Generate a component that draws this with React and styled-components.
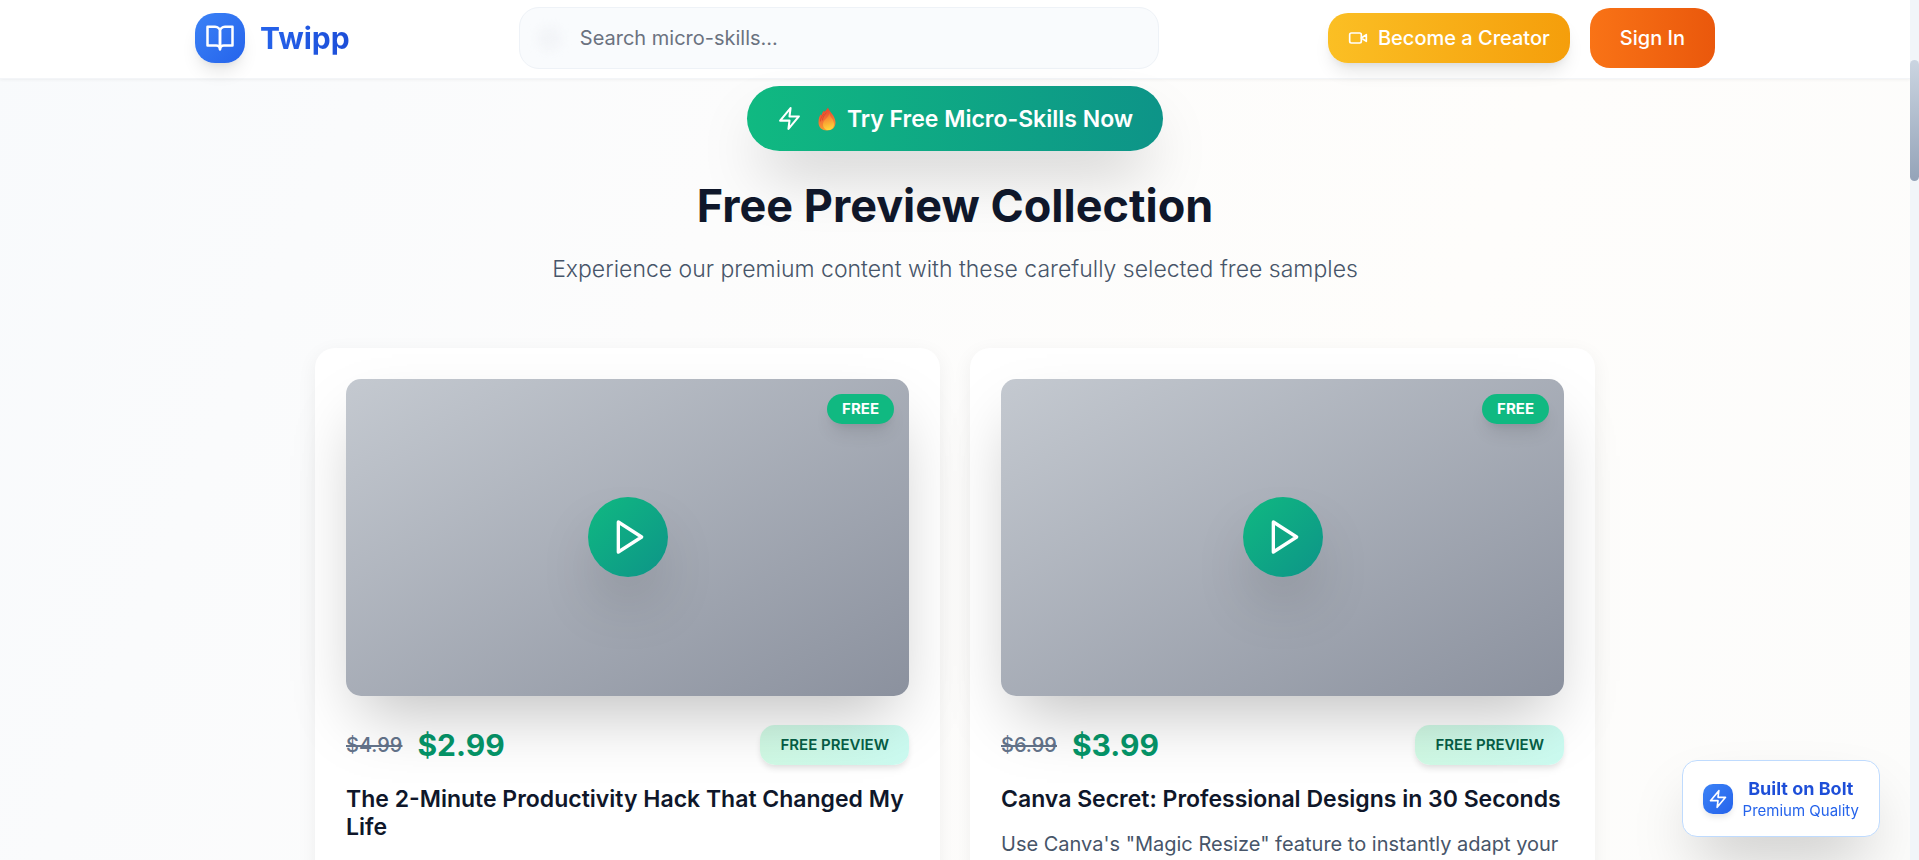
import React from 'react';
import styled, { createGlobalStyle } from 'styled-components';

const GlobalStyle = createGlobalStyle`
  *, *::before, *::after { box-sizing: border-box; }
  body { margin: 0; font-family: Inter, "Liberation Sans", sans-serif; color: #0f172a; }
  h2, h3, p { margin: 0; }
  button, input { font-family: inherit; }
  button { border: 0; cursor: pointer; }
`;

const softShadow = '0 12px 18px -4px rgba(0,0,0,.1), 0 5px 8px -5px rgba(0,0,0,.1)';
const deepShadow = '0 31px 62px -15px rgba(0, 0, 0, 0.25)';

const Page = styled.div`
  height: 100vh;
  overflow: hidden;
  padding-right: 9px;
  background: linear-gradient(112deg, #f8fafc 0%, #fcfcfc 35%, #fefdfb 70%, #fcfcfb 100%);
`;

const Header = styled.header`
  height: 79px;
  padding: 0 40px;
  background: rgba(255, 255, 255, 0.95);
  border-bottom: 1px solid #f3f5f8;
  box-shadow: 0 1px 3px rgba(0, 0, 0, 0.05);
`;

const HeaderInner = styled.div`
  display: flex;
  align-items: center;
  justify-content: space-between;
  max-width: 1520px;
  height: 76px;
  margin: 0 auto;
`;

const Brand = styled.a`
  display: flex;
  align-items: center;
  gap: 15px;
  text-decoration: none;
`;

const IconTile = styled.span`
  display: flex;
  align-items: center;
  justify-content: center;
  flex: none;
  width: ${(p) => p.$size}px;
  height: ${(p) => p.$size}px;
  border-radius: ${(p) => p.$radius}px;
  color: #fff;
  background: linear-gradient(135deg, #3b82f6, #2563eb);
  box-shadow: ${(p) => p.$shadow};
`;

const GradientText = styled.span`
  font-size: ${(p) => p.$size}px;
  line-height: ${(p) => p.$line}px;
  font-weight: 700;
  color: transparent;
  background: linear-gradient(90deg, ${(p) => p.$from || '#2563eb'}, #1d4ed8);
  background-clip: text;
  -webkit-background-clip: text;
`;

const SearchForm = styled.form`
  display: flex;
  align-items: center;
  gap: 18px;
  flex: 0 1 640px;
  height: 62px;
  padding: 0 20px 0 17px;
  border: 1px solid #eef2f7;
  border-radius: 20px;
  background: #f9fbfd;
`;

const SearchGlow = styled.span`
  flex: none;
  width: 25px;
  height: 25px;
  border-radius: 50%;
  background: #f3f5f8;
  filter: blur(4px);
`;

const SearchInput = styled.input`
  flex: 1;
  min-width: 0;
  padding: 0;
  border: 0;
  outline: 0;
  background: transparent;
  font-size: 20px;
  line-height: 30px;
  &::placeholder { color: #6b7280; opacity: 1; }
`;

const Actions = styled.div`
  display: flex;
  align-items: center;
  gap: 20px;
`;

const ActionButton = styled.button`
  display: flex;
  align-items: center;
  gap: 10px;
  height: ${(p) => (p.$primary ? 60 : 50)}px;
  padding: 0 ${(p) => (p.$primary ? 30 : 20)}px;
  border-radius: 20px;
  color: #fff;
  font-size: 20px;
  font-weight: 500;
  white-space: nowrap;
  background: ${(p) =>
    p.$primary
      ? 'linear-gradient(90deg, #f97316, #ea580c)'
      : 'linear-gradient(90deg, #fbbf24, #f59e0b)'};
  box-shadow: ${(p) => (p.$primary ? 'none' : softShadow)};
`;

const Main = styled.main`
  display: flex;
  flex-direction: column;
  align-items: center;
  padding: 7px 40px 0;
`;

const TryButton = styled.button`
  display: flex;
  align-items: center;
  gap: 15px;
  height: 65px;
  padding: 0 30px;
  border-radius: 33px;
  color: #fff;
  font-size: 23px;
  font-weight: 600;
  background: linear-gradient(90deg, #10b981, #0d9488);
  box-shadow: ${deepShadow};
`;

const TryLabel = styled.span`
  display: flex;
  align-items: center;
  gap: 10px;
`;

const Title = styled.h2`
  margin-top: 30px;
  font-size: 45px;
  line-height: 50px;
  font-weight: 700;
`;

const Subtitle = styled.p`
  margin-top: 20px;
  font-size: 23px;
  line-height: 37px;
  font-weight: 300;
  color: #475569;
`;

const Grid = styled.div`
  display: grid;
  grid-template-columns: repeat(2, minmax(0, 1fr));
  gap: 30px;
  width: 100%;
  max-width: 1280px;
  margin-top: 60px;
`;

const Card = styled.article`
  padding: 31px;
  min-height: 600px;
  border-radius: 20px;
  background: #fff;
  box-shadow: 0 5px 20px rgba(0, 0, 0, 0.06);
`;

const Thumb = styled.div`
  position: relative;
  display: flex;
  align-items: center;
  justify-content: center;
  aspect-ratio: 16 / 9;
  border-radius: 15px;
  background: linear-gradient(to bottom right, #c4c9d0, #8b919e);
  box-shadow: ${deepShadow};
`;

const FreeBadge = styled.span`
  position: absolute;
  top: 15px;
  right: 15px;
  padding: 5px 15px;
  border-radius: 15px;
  color: #fff;
  background: #10b981;
  font-size: 15px;
  line-height: 20px;
  font-weight: 700;
  box-shadow: ${softShadow};
`;

const PlayButton = styled.button`
  display: flex;
  align-items: center;
  justify-content: center;
  width: 80px;
  height: 80px;
  padding: 0 0 0 5px;
  border-radius: 50%;
  color: #fff;
  background: linear-gradient(135deg, #10b981, #0d9488);
  box-shadow: ${deepShadow};
`;

const PriceRow = styled.div`
  display: flex;
  align-items: center;
  gap: 15px;
  margin-top: 29px;
`;

const OldPrice = styled.s`
  font-size: 20px;
  line-height: 30px;
  font-weight: 500;
  color: #64748b;
`;

const Price = styled.strong`
  flex: 1;
  font-size: 30px;
  line-height: 40px;
  font-weight: 700;
  color: #059669;
`;

const PreviewTag = styled.span`
  padding: 10px 20px;
  border-radius: 15px;
  color: #065f46;
  background: linear-gradient(90deg, #d1fae5, #ccfbf1);
  font-size: 15px;
  line-height: 20px;
  font-weight: 600;
  box-shadow: 0 4px 6px -1px rgba(0, 0, 0, 0.12);
`;

const CardTitle = styled.h3`
  margin-top: 20px;
  font-size: 23px;
  line-height: 28px;
  font-weight: 600;
`;

const CardText = styled.p`
  margin-top: 15px;
  font-size: 20px;
  line-height: 33px;
  color: #475569;
`;

const BoltCard = styled.a`
  position: fixed;
  right: 39px;
  bottom: 23px;
  display: flex;
  align-items: center;
  gap: 10px;
  padding: 15px 20px;
  border: 1px solid #bfdbfe;
  border-radius: 15px;
  background: #fff;
  text-decoration: none;
  box-shadow: ${deepShadow};
`;

const BoltText = styled.span`
  display: flex;
  flex-direction: column;
  align-items: center;
`;

const BoltNote = styled.span`
  font-size: 15px;
  line-height: 20px;
  color: #2563eb;
`;

const ScrollTrack = styled.div`
  position: fixed;
  top: 0;
  right: 0;
  bottom: 0;
  width: 9px;
  padding-top: 60px;
  background: #f1f5f9;
`;

const ScrollThumb = styled.div`
  height: 121px;
  border-radius: 5px;
  background: linear-gradient(180deg, #cbd5e1, #94a3b8);
`;

const LineIcon = ({ size, children }) => (
  <svg
    width={size}
    height={size}
    viewBox="0 0 24 24"
    fill="none"
    stroke="currentColor"
    strokeWidth="2"
    strokeLinecap="round"
    strokeLinejoin="round"
    aria-hidden="true"
  >
    {children}
  </svg>
);

const BookIcon = ({ size }) => (
  <LineIcon size={size}>
    <path d="M2 3h6a4 4 0 0 1 4 4v14a3 3 0 0 0-3-3H2z" />
    <path d="M22 3h-6a4 4 0 0 0-4 4v14a3 3 0 0 1 3-3h7z" />
  </LineIcon>
);

const VideoIcon = ({ size }) => (
  <LineIcon size={size}>
    <path d="m22 8-6 4 6 4V8Z" />
    <rect x="2" y="6" width="14" height="12" rx="2" />
  </LineIcon>
);

const ZapIcon = ({ size }) => (
  <LineIcon size={size}>
    <polygon points="13 2 3 14 12 14 11 22 21 10 12 10 13 2" />
  </LineIcon>
);

const PlayIcon = ({ size }) => (
  <LineIcon size={size}>
    <polygon points="5 3 19 12 5 21 5 3" />
  </LineIcon>
);

const Flame = () => (
  <svg width="20" height="24" viewBox="-1 0 20 24" aria-hidden="true">
    <defs>
      <linearGradient id="flameOuter" x1="0.4" y1="0" x2="0.6" y2="1">
        <stop offset="0" stopColor="#e8402f" />
        <stop offset="0.6" stopColor="#f37a35" />
        <stop offset="1" stopColor="#f9a32f" />
      </linearGradient>
      <linearGradient id="flameInner" x1="0.4" y1="0" x2="0.6" y2="1">
        <stop offset="0" stopColor="#f5702f" />
        <stop offset="0.6" stopColor="#fbb034" />
        <stop offset="1" stopColor="#ffdb3d" />
      </linearGradient>
    </defs>
    <path d="M10 0.500C10.500 4 17.500 8.500 17.500 15.500C17.500 20.500 14 23.500 9 23.500C4 23.500 0.500 20.500 0.500 15.500C0.500 11.500 1.400 9 2.800 7.200C3 7.900 3.200 8.200 3.500 8.400C3.800 6.500 4.800 4.800 6 3.800C6.200 4.300 6.400 4.600 6.800 4.800C7.800 3.500 9 2.300 10 0.500Z" fill="url(#flameOuter)" />
    <path d="M2.500 14C2.500 11 4 9 5.500 7.500M4.500 13C4.500 10 6.500 8 8 6" fill="none" stroke="#d9432f" strokeWidth="0.800" strokeLinecap="round" />
    <path d="M11.500 6.500C12 10 16 12.500 16 17C16 21 13 23 10.300 23C7.500 23 5 21 5 17.500C5 13 9.800 11.500 11.500 6.500Z" fill="url(#flameInner)" />
  </svg>
);

const courses = [
  {
    title: 'The 2-Minute Productivity Hack That Changed My Life',
    oldPrice: '$4.99',
    price: '$2.99',
  },
  {
    title: 'Canva Secret: Professional Designs in 30 Seconds',
    oldPrice: '$6.99',
    price: '$3.99',
    text: 'Use Canva\'s "Magic Resize" feature to instantly adapt your',
  },
];

export default function App() {
  return (
    <Page>
      <GlobalStyle />
      <Header>
        <HeaderInner>
          <Brand href="#">
            <IconTile $size={50} $radius={20} $shadow={softShadow}>
              <BookIcon size={30} />
            </IconTile>
            <GradientText $size={30} $line={40}>Twipp</GradientText>
          </Brand>
          <SearchForm role="search">
            <SearchGlow />
            <SearchInput type="search" placeholder="Search micro-skills..." aria-label="Search micro-skills" />
          </SearchForm>
          <Actions>
            <ActionButton type="button">
              <VideoIcon size={20} />
              Become a Creator
            </ActionButton>
            <ActionButton type="button" $primary>Sign In</ActionButton>
          </Actions>
        </HeaderInner>
      </Header>
      <Main>
        <TryButton type="button">
          <ZapIcon size={25} />
          <TryLabel>
            <Flame />
            Try Free Micro-Skills Now
          </TryLabel>
        </TryButton>
        <Title>Free Preview Collection</Title>
        <Subtitle>Experience our premium content with these carefully selected free samples</Subtitle>
        <Grid>
          {courses.map((course) => (
            <Card key={course.title}>
              <Thumb>
                <FreeBadge>FREE</FreeBadge>
                <PlayButton type="button" aria-label={`Play ${course.title}`}>
                  <PlayIcon size={40} />
                </PlayButton>
              </Thumb>
              <PriceRow>
                <OldPrice>{course.oldPrice}</OldPrice>
                <Price>{course.price}</Price>
                <PreviewTag>FREE PREVIEW</PreviewTag>
              </PriceRow>
              <CardTitle>{course.title}</CardTitle>
              {course.text && <CardText>{course.text}</CardText>}
            </Card>
          ))}
        </Grid>
      </Main>
      <BoltCard href="#">
        <IconTile $size={30} $radius={10} $shadow="0 4px 6px -1px rgba(0,0,0,.1)">
          <ZapIcon size={20} />
        </IconTile>
        <BoltText>
          <GradientText $size={18} $line={25} $from="#1d4ed8">Built on Bolt</GradientText>
          <BoltNote>Premium Quality</BoltNote>
        </BoltText>
      </BoltCard>
      <ScrollTrack aria-hidden="true">
        <ScrollThumb />
      </ScrollTrack>
    </Page>
  );
}
